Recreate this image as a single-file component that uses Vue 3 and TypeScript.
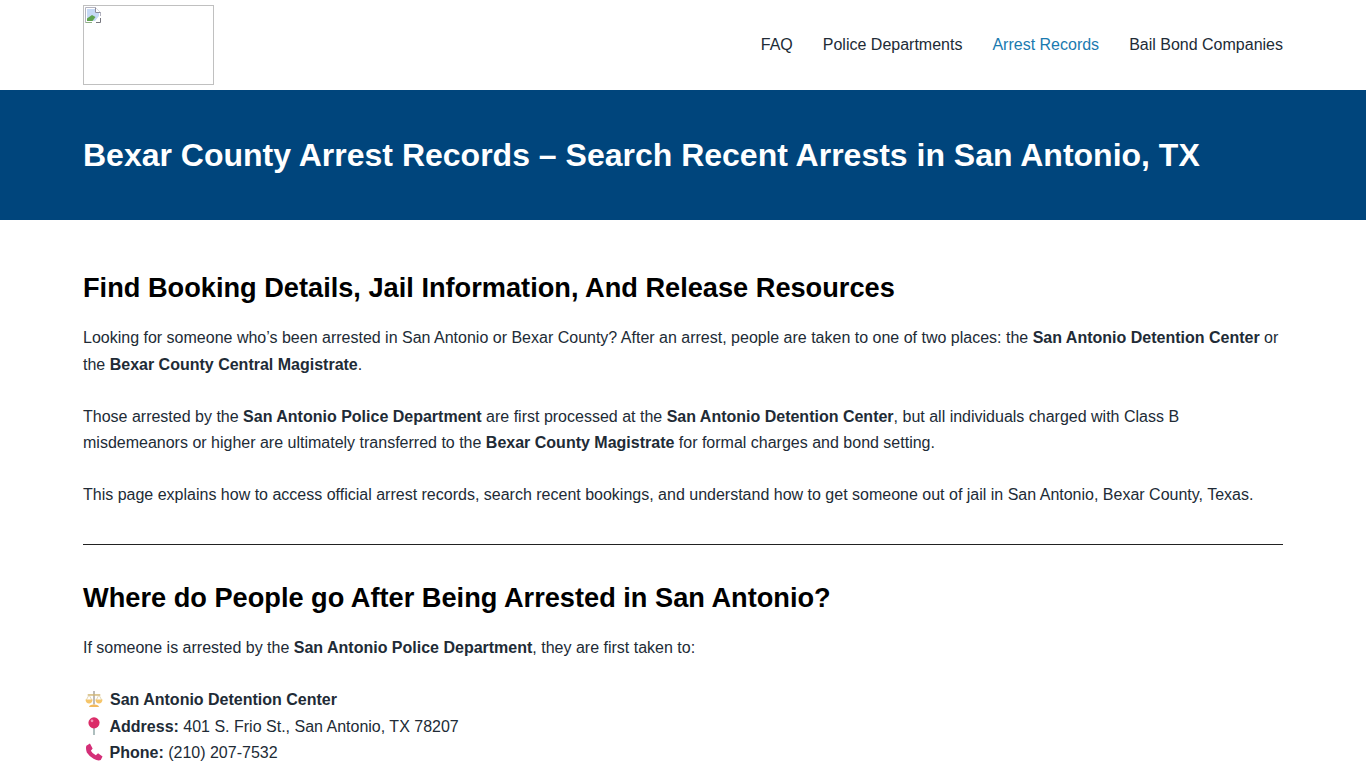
<script setup lang="ts">
const navLinks = [
  { label: 'FAQ', active: false },
  { label: 'Police Departments', active: false },
  { label: 'Arrest Records', active: true },
  { label: 'Bail Bond Companies', active: false },
]
</script>

<template>
  <header class="site-header">
    <div class="container header-row">
      <a class="logo" href="#">
        <!-- broken image placeholder -->
        <svg class="broken" width="16" height="16" viewBox="0 0 16 16">
          <path d="M0.5 15.500V0.500H10.500L15.500 5.500V9" fill="none" stroke="#b4b4c0" />
          <path d="M2 2H10V6H14V9L10 14H2Z" fill="#c6d9f5" />
          <path d="M2 14V11.500L7 8L10.500 10L7.500 14Z" fill="#5fa34f" />
          <path d="M10.500 0.500V5.500H15.500" fill="#fff" stroke="#8c8c9c" />
          <path d="M11 15.500H15.500V11" fill="none" stroke="#77777f" />
          <path d="M0.500 15.500H7" stroke="#8fae86" />
        </svg>
      </a>
      <nav class="nav">
        <a v-for="link in navLinks" :key="link.label" href="#" :class="{ active: link.active }">{{ link.label }}</a>
      </nav>
    </div>
  </header>

  <section class="hero">
    <div class="container">
      <h1>Bexar County Arrest Records – Search Recent Arrests in San Antonio, TX</h1>
    </div>
  </section>

  <main class="container content">
    <h2>Find Booking Details, Jail Information, And Release Resources</h2>
    <p>
      Looking for someone who’s been arrested in San Antonio or Bexar County? After an arrest, people are taken to one of two places: the
      <strong>San Antonio Detention Center</strong> or the <strong>Bexar County Central Magistrate</strong>.
    </p>
    <p>
      Those arrested by the <strong>San Antonio Police Department</strong> are first processed at the
      <strong>San Antonio Detention Center</strong>, but all individuals charged with Class B misdemeanors or higher are ultimately transferred to the
      <strong>Bexar County Magistrate</strong> for formal charges and bond setting.
    </p>
    <p>
      This page explains how to access official arrest records, search recent bookings, and understand how to get someone out of jail in San Antonio, Bexar County, Texas.
    </p>
    <hr />
    <h2>Where do People go After Being Arrested in San Antonio?</h2>
    <p>If someone is arrested by the <strong>San Antonio Police Department</strong>, they are first taken to:</p>
    <p class="facts">
      <svg class="emoji" viewBox="0 0 20 20">
        <path d="M10 1V16" stroke="#a8a29a" stroke-width="1.6" />
        <path d="M3 5.500H17" stroke="#d3b673" stroke-width="1.6" />
        <path d="M1.500 11L4.500 5.500L7.500 11M12.500 11L15.500 5.500L18.500 11" fill="none" stroke="#d8c79a" stroke-width="0.8" />
        <path d="M0.500 10.500H8.500Q8 15 4.500 15T0.500 10.500Z M11.500 10.500H19.500Q19 15 15.500 15T11.500 10.500Z" fill="#f5c56a" />
        <path d="M4.500 19Q4.500 16 10 16T15.500 19Z" fill="#f2b95c" />
      </svg>
      <strong>San Antonio Detention Center</strong><br />
      <svg class="emoji tight" viewBox="0 0 20 20">
        <path d="M10 10V20" stroke="#8fa6a6" stroke-width="1.6" />
        <circle cx="10" cy="6.500" r="6.200" fill="#db2c68" />
        <circle cx="7.800" cy="4.300" r="1.500" fill="#f294b6" />
      </svg>
      <strong>Address:</strong> 401 S. Frio St., San Antonio, TX 78207<br />
      <svg class="emoji tight" viewBox="0 0 20 20">
        <path d="M1.500 3L5.500 0.500L8.500 6L6.500 8.500Q8 11.500 12 13.500L14.500 11.500L19.500 15L17.500 19Q14.500 20.500 9.500 17.500T2 10.500Q0.500 6 1.500 3Z" fill="#d42f78" />
      </svg>
      <strong>Phone:</strong> (210) 207-7532
    </p>
  </main>
</template>

<style>
html, body {
  margin: 0;
  overflow: hidden;
  background: #fff;
}
</style>

<style scoped>
.container {
  width: 1200px;
  margin: 0 auto;
  box-sizing: border-box;
}
.site-header {
  height: 90px;
  background: #fff;
}
.header-row {
  height: 90px;
  display: flex;
  align-items: center;
  justify-content: space-between;
}
.logo {
  display: block;
  width: 131px;
  height: 80px;
  box-sizing: border-box;
  border: 1px solid #c0c0c0;
  padding: 1px;
  line-height: 0;
}
.nav {
  display: flex;
  gap: 30px;
  font: 16px/26px "Liberation Sans", Arial, sans-serif;
}
.nav a {
  color: #212b36;
  text-decoration: none;
}
.nav a.active {
  color: #1a7ab0;
}
.hero {
  height: 130px;
  background: #00457c;
  display: flex;
  align-items: center;
}
h1 {
  margin: 0;
  color: #fff;
  font: bold 32px/1.2 "Liberation Sans", Arial, sans-serif;
}
.content {
  padding-top: 51.4px;
  font: 16px/26.4px "Liberation Sans", Arial, sans-serif;
  color: #212b36;
}
h2 {
  margin: 0 0 20px;
  color: #000;
  font: bold 27.2px/34px "Liberation Sans", Arial, sans-serif;
}
p {
  margin: 0 0 25.6px;
}
hr {
  border: 0;
  border-top: 1px solid #222;
  margin: 35.6px 0 36px;
}
.emoji {
  width: 18px;
  height: 18px;
  margin: 0 7px 0 2px;
  vertical-align: -3px;
}
.emoji.tight {
  margin-right: 6.5px;
}
</style>
